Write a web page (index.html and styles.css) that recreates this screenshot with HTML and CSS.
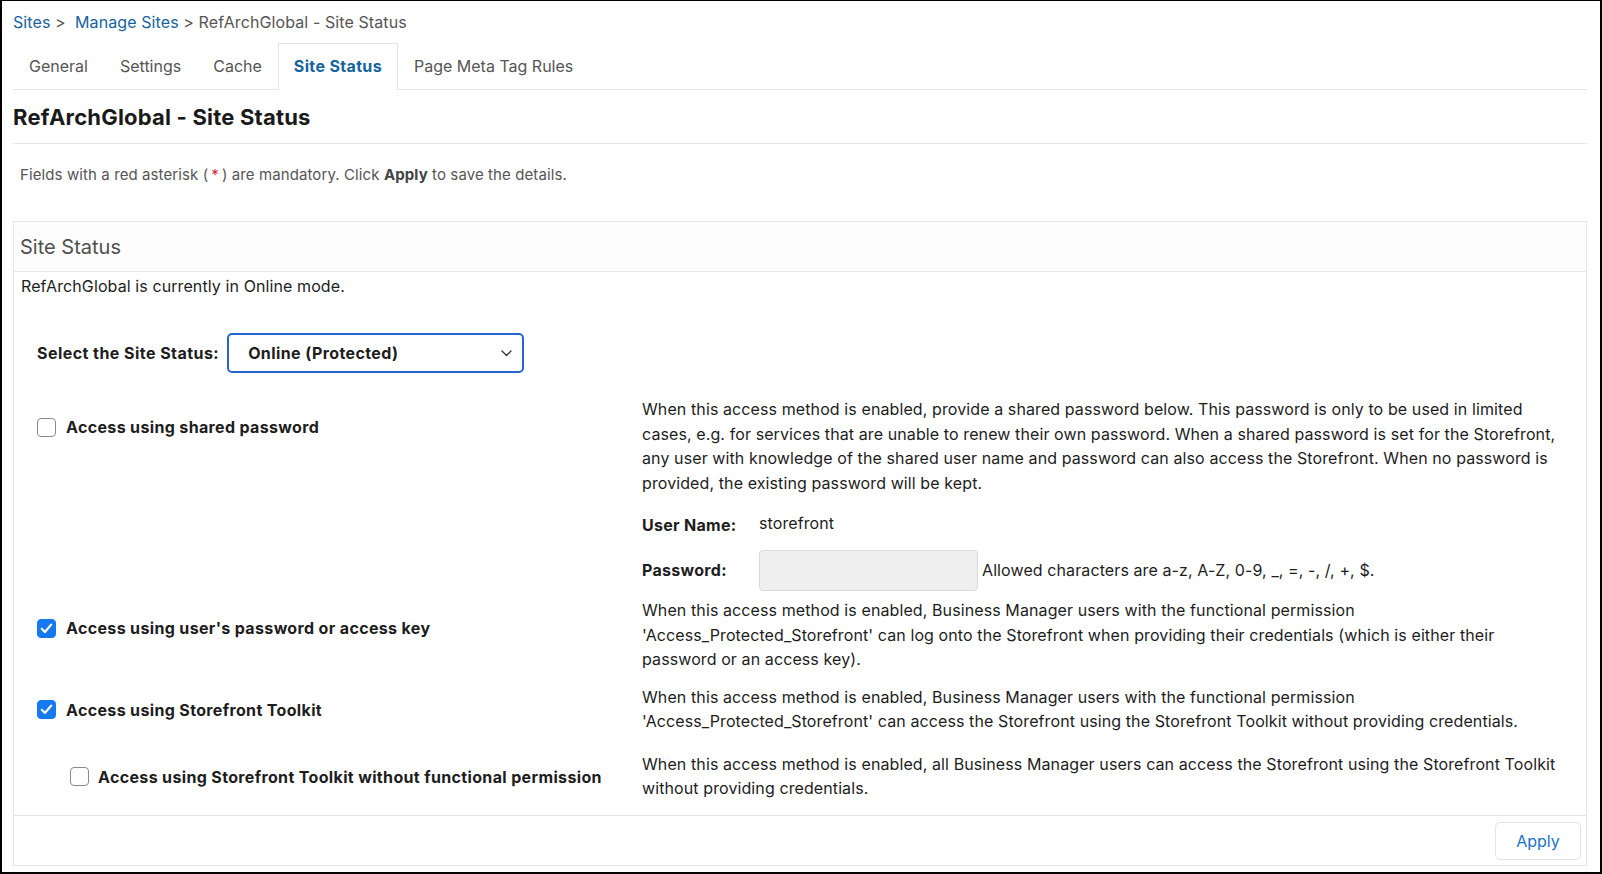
FILE: index.html
```html
<!DOCTYPE html>
<html lang="en">
<head>
<meta charset="utf-8">
<title>RefArchGlobal - Site Status</title>
<link rel="stylesheet" href="styles.css">
</head>
<body>
<div class="frame">
  <div class="page">
    <nav class="crumbs"><a class="crumb-link" href="#">Sites</a><span class="crumb-sep"> &gt;&nbsp; </span><a class="crumb-link" href="#">Manage Sites</a><span class="crumb-sep"> &gt; RefArchGlobal - Site Status</span></nav>

    <ul class="tabs">
      <li class="tab">General</li>
      <li class="tab">Settings</li>
      <li class="tab">Cache</li>
      <li class="tab tab-active">Site Status</li>
      <li class="tab">Page Meta Tag Rules</li>
    </ul>

    <h1 class="title">RefArchGlobal - Site Status</h1>

    <p class="note">Fields with a red asterisk (<span class="req">*</span>) are mandatory. Click <b>Apply</b> to save the details.</p>

    <section class="card">
      <header class="card-head">Site Status</header>
      <div class="card-body">
        <p class="mode">RefArchGlobal is currently in Online mode.</p>

        <div class="status-row">
          <span class="status-label">Select the Site Status:</span>
          <div class="select">
            <span>Online (Protected)</span>
            <svg class="chevron" width="11" height="7" viewBox="0 0 11 7"><path d="M1 1 L5.5 5.5 L10 1" fill="none" stroke="#333" stroke-width="1.3" stroke-linecap="round" stroke-linejoin="round"/></svg>
          </div>
        </div>

        <div class="opt opt-first">
          <div class="opt-label">
            <span class="box"></span>
            <span>Access using shared password</span>
          </div>
          <div class="opt-desc">
            <p>When this access method is enabled, provide a shared password below. This password is only to be used in limited cases, e.g. for services that are unable to renew their own password. When a shared password is set for the Storefront, any user with knowledge of the shared user name and password can also access the Storefront. When no password is provided, the existing password will be kept.</p>
            <div class="cred">
              <span class="cred-label">User Name:</span>
              <span class="cred-value">storefront</span>
            </div>
            <div class="cred cred-pass">
              <span class="cred-label">Password:</span>
              <span class="pass-input"></span>
              <span class="cred-hint">Allowed characters are a-z, A-Z, 0-9, _, =, -, /, +, $.</span>
            </div>
          </div>
        </div>

        <div class="opt opt-second">
          <div class="opt-label">
            <span class="box box-on"><svg width="13" height="11" viewBox="0 0 13 11"><path d="M1.8 5.8 L4.9 9 L11.2 1.6" fill="none" stroke="#fff" stroke-width="2.2" stroke-linecap="round" stroke-linejoin="round"/></svg></span>
            <span>Access using user's password or access key</span>
          </div>
          <div class="opt-desc">
            <p>When this access method is enabled, Business Manager users with the functional permission<br>'Access_Protected_Storefront' can log onto the Storefront when providing their credentials (which is either their password or an access key).</p>
          </div>
        </div>

        <div class="opt opt-third">
          <div class="opt-label opt-label-tight">
            <span class="box box-on"><svg width="13" height="11" viewBox="0 0 13 11"><path d="M1.8 5.8 L4.9 9 L11.2 1.6" fill="none" stroke="#fff" stroke-width="2.2" stroke-linecap="round" stroke-linejoin="round"/></svg></span>
            <span>Access using Storefront Toolkit</span>
          </div>
          <div class="opt-desc">
            <p>When this access method is enabled, Business Manager users with the functional permission<br>'Access_Protected_Storefront' can access the Storefront using the Storefront Toolkit without providing credentials.</p>
          </div>
        </div>

        <div class="opt opt-fourth">
          <div class="opt-label opt-label-tight opt-label-nested">
            <span class="box"></span>
            <span>Access using Storefront Toolkit without functional permission</span>
          </div>
          <div class="opt-desc">
            <p>When this access method is enabled, all Business Manager users can access the Storefront using the Storefront Toolkit without providing credentials.</p>
          </div>
        </div>
      </div>
      <footer class="card-foot">
        <button class="btn" type="button">Apply</button>
      </footer>
    </section>
  </div>
</div>
</body>
</html>
```

FILE: styles.css
```css
* {
  box-sizing: border-box;
}

html, body {
  margin: 0;
  padding: 0;
  background: #fff;
}

body {
  font-family: Inter, "Noto Sans", "Liberation Sans", sans-serif;
  color: #1d1d1d;
}

.frame {
  width: 1602px;
  height: 874px;
  border: 2px solid #000;
  border-top-width: 1px;
  overflow: hidden;
}

.page {
  padding: 0 13px 0 11px;
}

/* breadcrumb trail */
.crumbs {
  padding-top: 11px;
  height: 42px;
  font-size: 16px;
  line-height: 20px;
  color: #555;
  white-space: nowrap;
  letter-spacing: 0.1px;
}

.crumb-link {
  color: #17639e;
  text-decoration: none;
}

.crumb-sep {
  color: #555;
}

/* tab strip */
.tabs {
  list-style: none;
  margin: 0;
  padding: 0;
  display: flex;
  border-bottom: 1px solid #e4e4e4;
  height: 47px;
}

.tab {
  height: 47px;
  padding: 0 15px 3px;
  display: flex;
  align-items: center;
  font-size: 16px;
  color: #555;
  border: 1px solid transparent;
  border-bottom: none;
}

.tab-active {
  background: #fff;
  border-color: #e4e4e4;
  color: #16649e;
  font-weight: 700;
  letter-spacing: 0.35px;
  margin-bottom: -1px;
  box-shadow: 0 1px 0 #fff;
}

.title {
  margin: 0;
  height: 54px;
  padding-top: 14px;
  font-size: 22px;
  line-height: 26px;
  font-weight: 700;
  letter-spacing: 0.2px;
  color: #1a1a1a;
  border-bottom: 1px solid #e6e6e6;
}

.note {
  margin: 0;
  padding: 22px 0 0 7px;
  height: 77px;
  font-size: 15px;
  line-height: 18px;
  letter-spacing: 0.1px;
  color: #555;
}

.note b {
  color: #444;
}

.req {
  color: #d8262f;
  padding: 0 3px;
}

/* site status card */
.card {
  border: 1px solid #e6e6e6;
  height: 645px;
  display: flex;
  flex-direction: column;
}

.card-head {
  height: 50px;
  padding-left: 6px;
  display: flex;
  align-items: center;
  font-size: 20px;
  color: #505050;
  border-bottom: 1px solid #e6e6e6;
  background: #fdfdfd;
}

.card-body {
  flex: 1;
  padding: 4px 22px 0 7px;
}

.mode {
  margin: 0;
  font-size: 16px;
  line-height: 20px;
  letter-spacing: 0.1px;
  color: #1d1d1d;
}

.status-row {
  margin-top: 37px;
  padding-left: 16px;
  display: flex;
  align-items: center;
  gap: 8px;
}

.status-label {
  font-size: 16px;
  font-weight: 700;
  letter-spacing: 0.45px;
  color: #1d1d1d;
}

.select {
  width: 297px;
  height: 40px;
  border: 2px solid #2366d1;
  border-radius: 5px;
  display: flex;
  align-items: center;
  justify-content: space-between;
  padding: 0 10px 0 19px;
  font-size: 16px;
  font-weight: 700;
  letter-spacing: 0.4px;
  color: #1d1d1d;
}

/* access option rows */
.opt {
  display: grid;
  grid-template-columns: 605px 1fr;
  padding-left: 16px;
}

.opt-first { margin-top: 24px; }
.opt-second { margin-top: 7px; }
.opt-third { margin-top: 13px; }
.opt-fourth { margin-top: 18px; }

.opt-label {
  display: flex;
  align-items: center;
  gap: 10px;
  padding-top: 20px;
  align-self: start;
  font-size: 16px;
  font-weight: 700;
  letter-spacing: 0.35px;
  color: #1d1d1d;
  line-height: 20px;
}

.opt-label-tight {
  padding-top: 15px;
}

.opt-label-nested {
  padding-left: 33px;
  gap: 9px;
}

.box {
  width: 19px;
  height: 19px;
  flex: none;
  border: 1px solid #8a8a8a;
  border-radius: 4px;
  background: #fff;
  display: flex;
  align-items: center;
  justify-content: center;
}

.box-on {
  background: #1779f2;
  border-color: #1779f2;
}

.opt-desc {
  font-size: 16px;
  line-height: 24.5px;
  letter-spacing: 0.1px;
  color: #1d1d1d;
}

.opt-desc p {
  margin: 0;
}

.cred {
  display: flex;
  align-items: center;
  margin-top: 20px;
  height: 20px;
}

.cred-pass {
  margin-top: 15px;
  height: 41px;
}

.cred-label {
  width: 117px;
  font-weight: 700;
  letter-spacing: 0.3px;
}

.cred-value {
  position: relative;
  top: -2px;
}

.pass-input {
  width: 219px;
  height: 41px;
  background: #efefef;
  border: 1px solid #d9d9d9;
  border-radius: 4px;
  margin-right: 4px;
}

.card-foot {
  height: 50px;
  border-top: 1px solid #e6e6e6;
  display: flex;
  justify-content: flex-end;
  align-items: flex-start;
  padding: 6px 5px 0 0;
}

.btn {
  width: 86px;
  height: 38px;
  background: #fff;
  border: 1px solid #e3e3e3;
  border-radius: 5px;
  font-family: inherit;
  font-size: 16px;
  color: #1a73c8;
}
```
